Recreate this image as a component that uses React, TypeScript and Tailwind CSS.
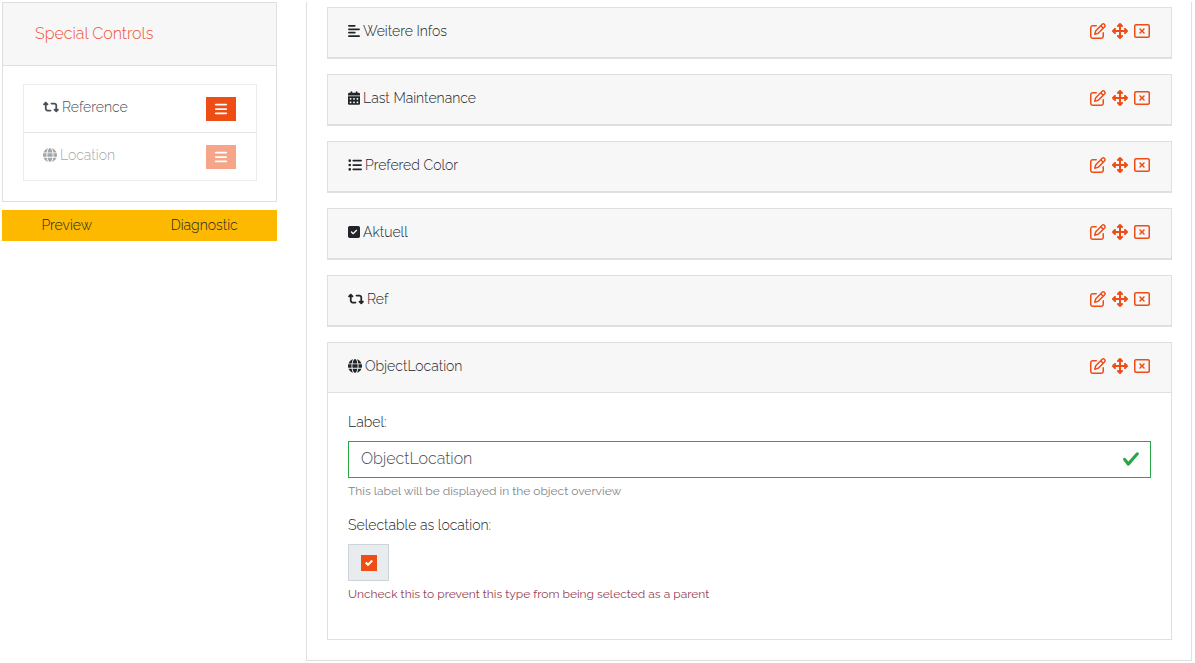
import { useState } from "react";
import type { IconType } from "react-icons";
import {
  FaAlignLeft,
  FaArrowsUpDownLeftRight,
  FaBars,
  FaCalendarDays,
  FaCheck,
  FaGlobe,
  FaListUl,
  FaRegPenToSquare,
  FaRegRectangleXmark,
  FaRetweet,
  FaSquareCheck,
} from "react-icons/fa6";

type Field = { name: string; icon: IconType; iconWidth: string };

const fields: Field[] = [
  { name: "Weitere Infos", icon: FaAlignLeft, iconWidth: "w-3" },
  { name: "Last Maintenance", icon: FaCalendarDays, iconWidth: "w-3" },
  { name: "Prefered Color", icon: FaListUl, iconWidth: "w-3.5" },
  { name: "Aktuell", icon: FaSquareCheck, iconWidth: "w-3" },
  { name: "Ref", icon: FaRetweet, iconWidth: "w-4" },
];

function FieldHeader({ name, icon: Icon, iconWidth }: Field) {
  return (
    <header className="flex h-[50px] items-center justify-between border-b border-[#dfdfdf] bg-[#f7f7f7] pr-[21px] pb-[3px] pl-5">
      <h2 className="flex items-center gap-[3px] text-sm">
        <Icon className={`h-3.5 ${iconWidth}`} />
        {name}
      </h2>
      <div className="flex items-center gap-1.5 text-base text-[#ee4d16]">
        <button type="button" aria-label={`Edit ${name}`}>
          <FaRegPenToSquare />
        </button>
        <button type="button" aria-label={`Move ${name}`}>
          <FaArrowsUpDownLeftRight />
        </button>
        <button type="button" aria-label={`Remove ${name}`}>
          <FaRegRectangleXmark />
        </button>
      </div>
    </header>
  );
}

function ControlItem({ name, icon: Icon, iconWidth }: Field) {
  return (
    <div className="flex h-[47px] items-center justify-between pr-5 pl-[19px] text-sm text-[#495057]">
      <span className="flex items-center gap-[3px] pb-1">
        <Icon className={`h-3.5 ${iconWidth}`} />
        {name}
      </span>
      <button
        type="button"
        aria-label={`Drag ${name}`}
        className="flex h-6 w-[30px] items-center justify-center bg-[#ee4d16] text-sm text-white"
      >
        <FaBars />
      </button>
    </div>
  );
}

export default function App() {
  const [label, setLabel] = useState("ObjectLocation");
  const [selectable, setSelectable] = useState(true);

  return (
    <div className="flex items-start gap-[29px] bg-white pt-0.5 pr-[3px] pl-0.5 font-['Raleway','Lato',sans-serif] font-light text-[#212529]">
      <aside className="w-[275px] shrink-0">
        <section className="border border-[#dfdfdf]">
          <h2 className="flex h-[63px] items-center border-b border-[#dfdfdf] bg-[#f7f7f7] px-8 text-base text-[#f0523a]">
            Special Controls
          </h2>
          <div className="pt-[18px] pr-[19px] pb-5 pl-5">
            <ul className="border border-[#ececec]">
              <li className="border-b border-[#e4e4e4]">
                <ControlItem name="Reference" icon={FaRetweet} iconWidth="w-4" />
              </li>
              <li className="opacity-50">
                <ControlItem name="Location" icon={FaGlobe} iconWidth="w-3.5" />
              </li>
            </ul>
          </div>
        </section>
        <nav className="mt-2 grid grid-cols-2 bg-[#fcb900] text-center text-sm">
          <a href="#preview" className="flex h-[31px] items-center justify-center pr-2 pb-0.5">
            Preview
          </a>
          <a href="#diagnostic" className="flex h-[31px] items-center justify-center pr-2 pb-0.5">
            Diagnostic
          </a>
        </nav>
      </aside>

      <main className="flex min-w-0 flex-1 flex-col gap-[15px] border border-t-0 border-[#dfdfdf] pt-[5px] pr-[19px] pb-5 pl-5">
        {fields.map((field) => (
          <article key={field.name} className="border border-[#dfdfdf]">
            <FieldHeader {...field} />
          </article>
        ))}

        <article className="border border-[#dfdfdf]">
          <FieldHeader name="ObjectLocation" icon={FaGlobe} iconWidth="w-3.5" />
          <form className="px-5 pt-[19px] pb-[37px]">
            <label htmlFor="field-label" className="mb-[9px] block text-sm">
              Label:
            </label>
            <div className="flex h-[37px] items-center border border-[#28a745] pr-2.5 pb-px pl-3">
              <input
                id="field-label"
                type="text"
                value={label}
                onChange={(e) => setLabel(e.target.value)}
                className="min-w-0 flex-1 bg-transparent text-base text-[#495057] outline-none"
              />
              <svg viewBox="0 0 8 8" className="size-[18px]" aria-hidden="true">
                <path
                  fill="#28a745"
                  d="M2.3 6.73L.6 4.53c-.4-1.04.46-1.4 1.1-.8l1.1 1.4 3.4-3.8c.6-.63 1.6-.27 1.2.7l-4 4.6c-.43.5-.8.4-1.1.1z"
                />
              </svg>
            </div>
            <p className="mt-[5px] mb-4 text-xs font-normal text-[#80868b]">
              This label will be displayed in the object overview
            </p>
            <label htmlFor="field-selectable" className="mb-[9px] block text-sm">
              Selectable as location:
            </label>
            <div className="grid h-[37px] w-[41px] place-items-center border border-[#ced4da] bg-[#e9ecef]">
              <input
                id="field-selectable"
                type="checkbox"
                checked={selectable}
                onChange={(e) => setSelectable(e.target.checked)}
                className="col-start-1 row-start-1 size-4 appearance-none border border-[#ee4d16] bg-white checked:bg-[#ee4d16]"
              />
              {selectable && (
                <svg
                  viewBox="0 0 8 8"
                  className="pointer-events-none col-start-1 row-start-1 size-2"
                  aria-hidden="true"
                >
                  <path
                    fill="#fff"
                    d="M6.564.75l-3.59 3.612-1.538-1.55L0 4.26 2.974 7.25 8 2.193z"
                  />
                </svg>
              )}
            </div>
            <p className="mt-[5px] text-xs font-normal text-[#974152]">
              Uncheck this to prevent this type from being selected as a parent
            </p>
          </form>
        </article>
      </main>
    </div>
  );
}
